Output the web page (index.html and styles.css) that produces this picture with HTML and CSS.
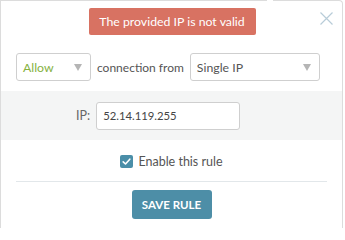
FILE: index.html
```html
<!DOCTYPE html>
<html>
<head>
<meta charset="utf-8">
<link rel="stylesheet" href="styles.css">
</head>
<body>
<div class="popup">
  <span class="notch"></span>
  <button class="close" aria-label="Close">
    <svg width="13" height="13" viewBox="0 0 13 13"><path d="M0.5 0.5 L12.5 12.5 M12.5 0.5 L0.5 12.5" stroke="#b8ccd8" stroke-width="1.2" fill="none"/></svg>
  </button>
  <div class="alert-wrap"><div class="alert">The provided IP is not valid</div></div>
  <div class="rule-row">
    <div class="select select-action"><span class="allow">Allow</span><span class="caret"></span></div>
    <span class="text">connection from</span>
    <div class="select select-source"><span>Single IP</span><span class="caret"></span></div>
  </div>
  <div class="band">
    <label class="ip-label">IP:</label>
    <div class="input">52.14.119.255</div>
  </div>
  <div class="check-row">
    <span class="checkbox"><svg width="13" height="13" viewBox="0 0 13 13"><path d="M3.2 6.8 L5.5 9 L9.8 4.2" stroke="#fff" stroke-width="1.6" fill="none" stroke-linecap="round" stroke-linejoin="round"/></svg></span>
    <span class="check-label">Enable this rule</span>
  </div>
  <hr class="divider">
  <div class="actions"><button class="save">SAVE RULE</button></div>
</div>
</body>
</html>
```
FILE: styles.css
```css
html, body {
  margin: 0;
  padding: 0;
  background: #fff;
}
body {
  font-family: "Lato", "Liberation Sans", sans-serif;
  font-size: 12px;
  color: #555;
  width: 345px;
  height: 228px;
  overflow: hidden;
}
.popup {
  position: relative;
  box-sizing: border-box;
  width: 343px;
  height: 228px;
  border: 1px solid #dcdcdc;
  border-bottom: 0;
  border-top-right-radius: 4px;
  background: #fff;
}
.notch {
  position: absolute;
  top: -1px;
  left: 266px;
  width: 6px;
  height: 2px;
  background: #fff;
}
.close {
  position: absolute;
  top: 11px;
  right: 9px;
  padding: 0;
  border: 0;
  background: none;
  width: 13px;
  height: 13px;
}
.close svg { display: block; }
.alert-wrap {
  display: flex;
  justify-content: center;
  padding-top: 7px;
}
.alert {
  background: #d87262;
  color: #fff;
  font-size: 12.3px;
  height: 27px;
  line-height: 27px;
  width: 167px;
  text-align: center;
  border-radius: 2px;
  margin-left: 1px;
}
.rule-row {
  display: flex;
  align-items: center;
  gap: 6px;
  padding: 18px 0 0 15px;
}
.select {
  box-sizing: border-box;
  height: 28px;
  border: 1px solid #cfcfcf;
  border-radius: 3px;
  display: flex;
  align-items: center;
  justify-content: space-between;
  padding: 0 8px 0 6px;
  font-size: 12.3px;
  color: #555;
}
.select-action { width: 75px; }
.select-source { width: 130px; }
.allow { color: #86b23f; }
.caret {
  width: 0;
  height: 0;
  border-left: 4px solid transparent;
  border-right: 4px solid transparent;
  border-top: 7px solid #b5b5b5;
}
.text { font-size: 12px; color: #555; }
.band {
  margin-top: 10px;
  background: #f4f5f5;
  height: 49px;
  display: flex;
  align-items: center;
  gap: 6px;
  padding-left: 75px;
}
.ip-label { font-size: 12.5px; color: #666; }
.input {
  box-sizing: border-box;
  width: 144px;
  height: 28px;
  background: #fff;
  border: 1px solid #cfcfcf;
  border-radius: 3px;
  padding: 0 6px;
  line-height: 26px;
  font-size: 11.3px;
  color: #444;
}
.check-row {
  display: flex;
  justify-content: center;
  align-items: center;
  gap: 5px;
  margin-top: 14px;
  height: 15px;
}
.checkbox {
  width: 13px;
  height: 13px;
  border-radius: 2px;
  background: #4a8ea8;
  display: block;
}
.checkbox svg { display: block; }
.check-label { font-size: 12.5px; color: #555; }
.divider {
  margin: 12px 15px 0 15px;
  border: 0;
  border-top: 1px solid #e2e7ea;
  height: 0;
}
.actions {
  display: flex;
  justify-content: center;
  padding-top: 8px;
}
.save {
  width: 80px;
  height: 29px;
  border: 0;
  border-radius: 3px;
  background: #4d8ea7;
  color: #fff;
  font-family: "Lato", "Liberation Sans", sans-serif;
  font-weight: bold;
  font-size: 11.5px;
  padding: 0;
}
```
